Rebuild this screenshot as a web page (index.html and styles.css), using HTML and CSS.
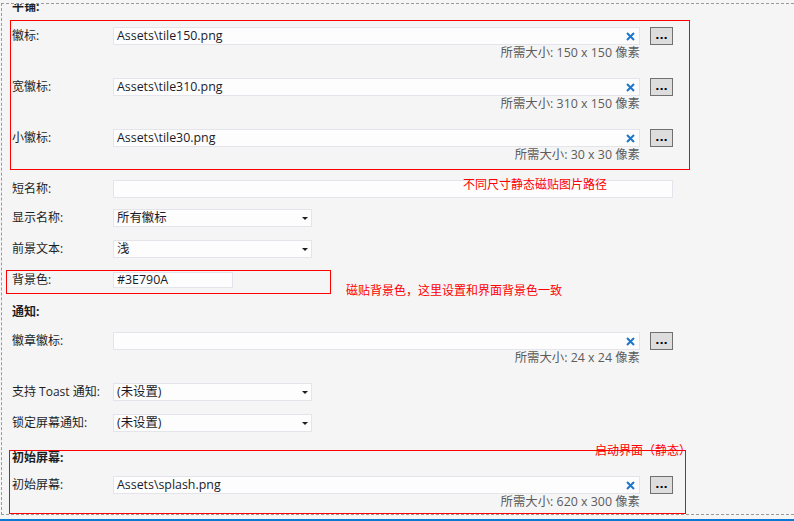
FILE: index.html
```html
<!DOCTYPE html>
<html lang="zh-CN">
<head>
<meta charset="utf-8">
<title>Package Manifest - Visual Assets</title>
<link rel="stylesheet" href="styles.css">
</head>
<body>
<div class="panel">
  <div class="heading cut">平铺:</div>

  <div class="box box-tiles">
    <div class="file-grid">
      <span class="label">徽标:</span>
      <div class="input"><span class="value">Assets\tile150.png</span><svg class="clear" viewBox="0 0 9 9"><path d="M1 1L8 8M8 1L1 8"/></svg></div>
      <button class="browse">...</button>
      <div class="hint">所需大小: 150 x 150 像素</div>
    </div>
    <div class="file-grid">
      <span class="label">宽徽标:</span>
      <div class="input"><span class="value">Assets\tile310.png</span><svg class="clear" viewBox="0 0 9 9"><path d="M1 1L8 8M8 1L1 8"/></svg></div>
      <button class="browse">...</button>
      <div class="hint">所需大小: 310 x 150 像素</div>
    </div>
    <div class="file-grid">
      <span class="label">小徽标:</span>
      <div class="input"><span class="value">Assets\tile30.png</span><svg class="clear" viewBox="0 0 9 9"><path d="M1 1L8 8M8 1L1 8"/></svg></div>
      <button class="browse">...</button>
      <div class="hint">所需大小: 30 x 30 像素</div>
    </div>
  </div>

  <div class="row row-short">
    <span class="label">短名称:</span>
    <div class="input wide"></div>
  </div>
  <div class="row row-sel1">
    <span class="label">显示名称:</span>
    <div class="select"><span class="value">所有徽标</span><svg class="arrow" viewBox="0 0 6 3"><path d="M0 0H6L3 3Z"/></svg></div>
  </div>
  <div class="row row-sel2">
    <span class="label">前景文本:</span>
    <div class="select"><span class="value">浅</span><svg class="arrow" viewBox="0 0 6 3"><path d="M0 0H6L3 3Z"/></svg></div>
  </div>

  <div class="box box-color">
    <div class="color-row">
      <span class="label">背景色:</span>
      <div class="input color"><span class="value">#3E790A</span></div>
    </div>
  </div>

  <div class="heading notify">通知:</div>
  <div class="file-grid loose">
    <span class="label">徽章徽标:</span>
    <div class="input"><span class="value"></span><svg class="clear" viewBox="0 0 9 9"><path d="M1 1L8 8M8 1L1 8"/></svg></div>
    <button class="browse">...</button>
    <div class="hint">所需大小: 24 x 24 像素</div>
  </div>
  <div class="row row-toast">
    <span class="label">支持 Toast 通知:</span>
    <div class="select"><span class="value">(未设置)</span><svg class="arrow" viewBox="0 0 6 3"><path d="M0 0H6L3 3Z"/></svg></div>
  </div>
  <div class="row row-lock">
    <span class="label">锁定屏幕通知:</span>
    <div class="select"><span class="value">(未设置)</span><svg class="arrow" viewBox="0 0 6 3"><path d="M0 0H6L3 3Z"/></svg></div>
  </div>

  <div class="box box-splash">
    <div class="heading inbox">初始屏幕:</div>
    <div class="file-grid">
      <span class="label">初始屏幕:</span>
      <div class="input"><span class="value">Assets\splash.png</span><svg class="clear" viewBox="0 0 9 9"><path d="M1 1L8 8M8 1L1 8"/></svg></div>
      <button class="browse">...</button>
      <div class="hint">所需大小: 620 x 300 像素</div>
    </div>
  </div>

  <div class="note note-tiles">不同尺寸静态磁贴图片路径</div>
  <div class="note note-color">磁贴背景色，这里设置和界面背景色一致</div>
  <div class="note note-splash">启动界面（静态）</div>
</div>
<div class="statusbar"></div>
</body>
</html>
```

FILE: styles.css
```css
* {
  box-sizing: border-box;
}

html,
body {
  margin: 0;
  height: 100%;
  overflow: hidden;
  background: #f5f5f5;
}

body {
  font-family: "Open Sans", "Noto Sans CJK SC", sans-serif;
  font-size: 12px;
  color: #1e1e1e;
}

.panel {
  position: relative;
  margin: 3px 0 0 1px;
  height: 512px;
  border-top: 1px dashed #9a9a9a;
  border-left: 1px dashed #9a9a9a;
  border-bottom: 1px dashed #9a9a9a;
  overflow: hidden;
}

.statusbar {
  height: 2px;
  margin-top: 4px;
  background: #0a78d4;
}

.heading {
  font-weight: bold;
  line-height: 16px;
  height: 16px;
  padding-left: 10px;
}

.heading.cut {
  margin-top: -5px;
}

.heading.notify {
  margin-top: 10px;
}

.heading.inbox {
  padding-left: 0;
  line-height: 13px;
  height: 13px;
}

.box {
  border: 1px solid #ff0000;
}

.box-tiles {
  margin: 5px 0 0 8px;
  width: 680px;
  padding: 6px 16px 6px 1px;
}

.box-color {
  margin: 12px 0 0 4px;
  width: 325px;
  height: 24px;
  padding: 1px 0 0 5px;
}

.box-splash {
  margin: 18px 0 0 7px;
  width: 677px;
  height: 64px;
  padding: 0 12px 0 2px;
}

.label {
  line-height: 18px;
  white-space: nowrap;
}

.file-grid {
  display: grid;
  grid-template-columns: 101px 527px 33px;
  grid-template-rows: 18px 16px;
  align-items: center;
}

.file-grid + .file-grid {
  margin-top: 17px;
}

.file-grid.loose {
  margin-top: 12px;
  padding-left: 10px;
}

.box-splash .file-grid {
  margin-top: 12px;
}

.hint {
  grid-column: 2;
  grid-row: 2;
  text-align: right;
  line-height: 16px;
  font-size: 12.4px;
  color: #5c5c5c;
  white-space: nowrap;
}

.input,
.select {
  height: 18px;
  background: #fdfdfd;
  border: 1px solid #e4e4ea;
  display: flex;
  align-items: center;
  padding: 0 4px 0 3px;
}

.value {
  font-size: 12.4px;
  line-height: 16px;
  color: #1b1b2a;
  white-space: nowrap;
}

.clear {
  margin-left: auto;
  width: 9px;
  height: 9px;
  fill: none;
  stroke: #1c76cc;
  stroke-width: 2;
}

.browse {
  justify-self: end;
  align-self: start;
  width: 23px;
  height: 18px;
  padding: 0;
  margin: 0;
  border: 1px solid #707070;
  background: #dddddd;
  font-family: "DejaVu Sans", sans-serif;
  font-weight: bold;
  font-size: 11px;
  line-height: 12px;
  color: #000;
}

.row {
  display: flex;
  align-items: center;
  height: 18px;
  padding-left: 10px;
}

.row .label {
  width: 101px;
  flex: none;
}

.row-short {
  margin-top: 10px;
}

.row-sel1 {
  margin-top: 11px;
}

.row-sel2 {
  margin-top: 13px;
}

.row-toast {
  margin-top: 17px;
}

.row-lock {
  margin-top: 13px;
}

.input.wide {
  width: 560px;
}

.select {
  width: 199px;
  padding-right: 3px;
}

.arrow {
  margin-left: auto;
  width: 6px;
  height: 3px;
  fill: #1e1e1e;
}

.color-row {
  display: flex;
  align-items: center;
  height: 16px;
}

.color-row .label {
  width: 101px;
  flex: none;
}

.input.color {
  width: 120px;
  height: 16px;
}

.note {
  position: absolute;
  font-family: "Noto Sans CJK SC", sans-serif;
  font-size: 12px;
  line-height: 14px;
  color: #ff0000;
  white-space: nowrap;
}

.note-tiles {
  left: 461px;
  top: 173px;
}

.note-color {
  left: 344px;
  top: 279px;
}

.note-splash {
  left: 593px;
  top: 439px;
}
```
